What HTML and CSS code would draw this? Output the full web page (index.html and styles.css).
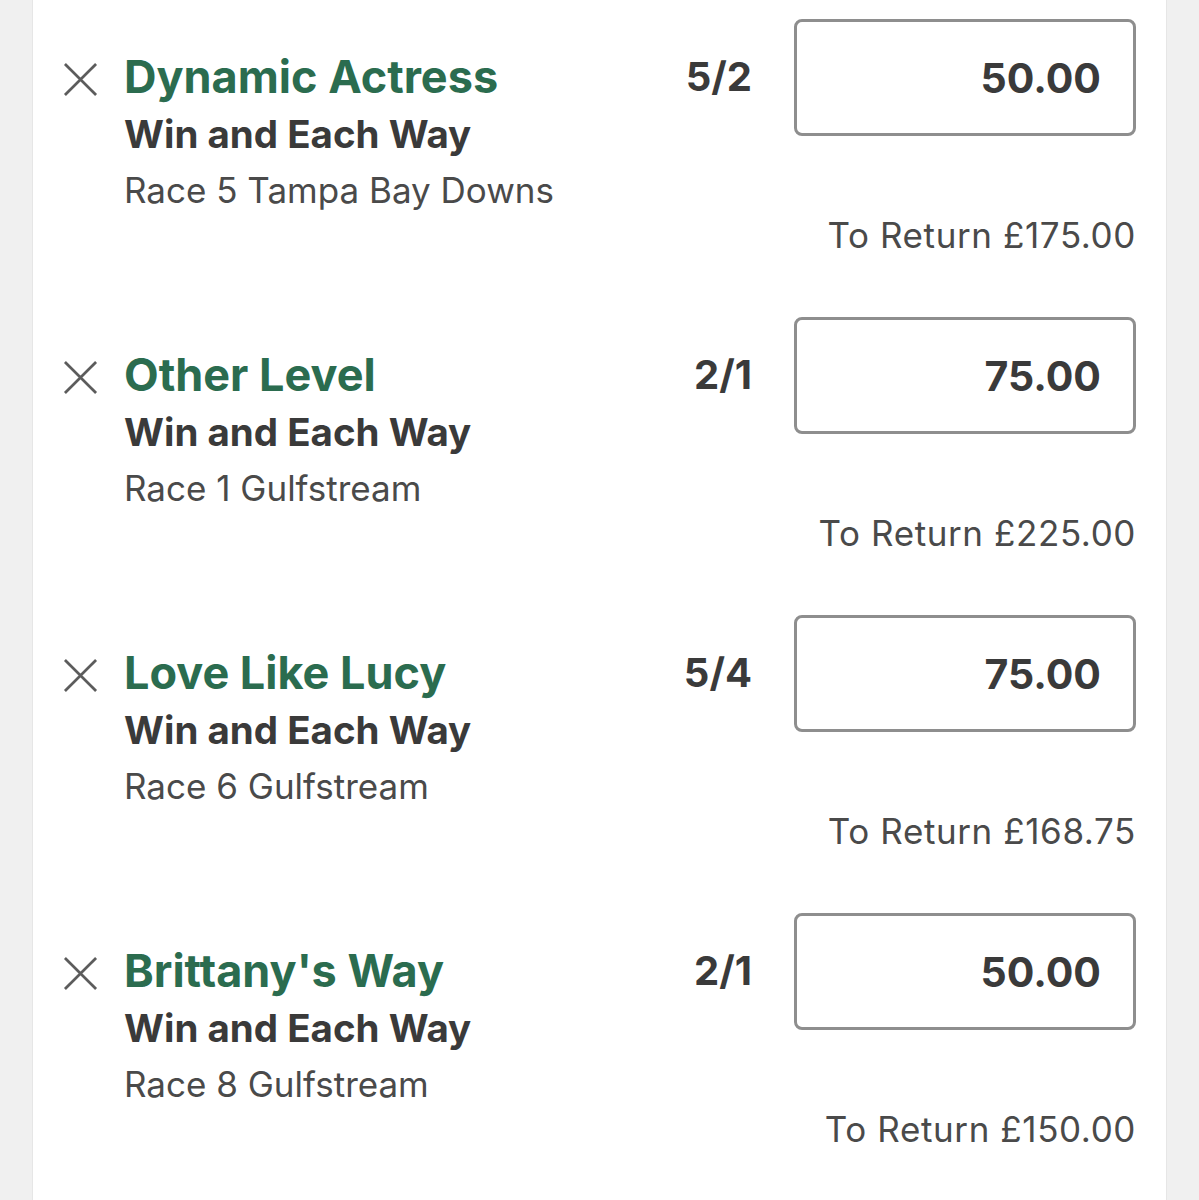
FILE: index.html
```html
<!DOCTYPE html>
<html lang="en">
<head>
<meta charset="utf-8">
<title>Bet Slip</title>
<link rel="stylesheet" href="styles.css">
</head>
<body>
<div class="page">
  <div class="card">
    <div class="bet">
      <svg class="remove" viewBox="0 0 36 36" aria-hidden="true"><path d="M2 2 L34 34 M34 2 L2 34"/></svg>
      <div class="info">
        <div class="name">Dynamic Actress</div>
        <div class="market">Win and Each Way</div>
        <div class="race">Race 5 Tampa Bay Downs</div>
      </div>
      <div class="odds">5/2</div>
      <div class="stake">50.00</div>
      <div class="return">To Return £175.00</div>
    </div>
    <div class="bet">
      <svg class="remove" viewBox="0 0 36 36" aria-hidden="true"><path d="M2 2 L34 34 M34 2 L2 34"/></svg>
      <div class="info">
        <div class="name">Other Level</div>
        <div class="market">Win and Each Way</div>
        <div class="race">Race 1 Gulfstream</div>
      </div>
      <div class="odds">2/1</div>
      <div class="stake">75.00</div>
      <div class="return">To Return £225.00</div>
    </div>
    <div class="bet">
      <svg class="remove" viewBox="0 0 36 36" aria-hidden="true"><path d="M2 2 L34 34 M34 2 L2 34"/></svg>
      <div class="info">
        <div class="name">Love Like Lucy</div>
        <div class="market">Win and Each Way</div>
        <div class="race">Race 6 Gulfstream</div>
      </div>
      <div class="odds">5/4</div>
      <div class="stake">75.00</div>
      <div class="return">To Return £168.75</div>
    </div>
    <div class="bet">
      <svg class="remove" viewBox="0 0 36 36" aria-hidden="true"><path d="M2 2 L34 34 M34 2 L2 34"/></svg>
      <div class="info">
        <div class="name">Brittany's Way</div>
        <div class="market">Win and Each Way</div>
        <div class="race">Race 8 Gulfstream</div>
      </div>
      <div class="odds">2/1</div>
      <div class="stake">50.00</div>
      <div class="return">To Return £150.00</div>
    </div>
  </div>
</div>
</body>
</html>
```

FILE: styles.css
```css
html, body {
  margin: 0;
  padding: 0;
  background: #f0f0f0;
}
body {
  font-family: Inter, Roboto, "Liberation Sans", Arial, sans-serif;
  color: #3b3b3b;
}
.page {
  display: flex;
  justify-content: flex-start;
  padding-left: 32px;
  height: 1200px;
  overflow: hidden;
}
.card {
  width: 1135px;
  background: #ffffff;
  border-left: 1px solid #e6e6e6;
  border-right: 1px solid #e6e6e6;
  box-sizing: border-box;
  padding: 0 30px 0 30px;
}
.bet {
  display: grid;
  grid-template-columns: 35px 1fr auto 342px;
  grid-template-rows: auto auto;
  column-gap: 26px;
  align-items: start;
  padding: 19px 0 43px;
}
.remove {
  width: 35px;
  height: 35px;
  margin-top: 43px;
  fill: none;
  stroke: #5c5c5c;
  stroke-width: 2.8;
}
.info {
  padding-top: 32px;
}
.name {
  font-size: 45px;
  line-height: 52px;
  font-weight: 700;
  color: #2b6c4f;
}
.market {
  font-size: 38.5px;
  line-height: 62px;
  font-weight: 700;
  color: #3a3a3a;
}
.race {
  font-size: 35px;
  line-height: 50px;
  color: #4a4a4a;
}
.odds {
  font-size: 40px;
  line-height: 52px;
  font-weight: 700;
  color: #3a3a3a;
  margin-top: 32px;
  margin-right: 16px;
}
.stake {
  box-sizing: border-box;
  height: 117px;
  border: 3px solid #8e8e8e;
  border-radius: 8px;
  display: flex;
  align-items: center;
  justify-content: flex-end;
  padding-right: 32px;
  font-size: 41px;
  font-weight: 700;
  color: #3a3a3a;
}
.return {
  grid-column: 1 / 5;
  justify-self: end;
  font-size: 35px;
  line-height: 40px;
  letter-spacing: 0.6px;
  color: #4a4a4a;
}
```
